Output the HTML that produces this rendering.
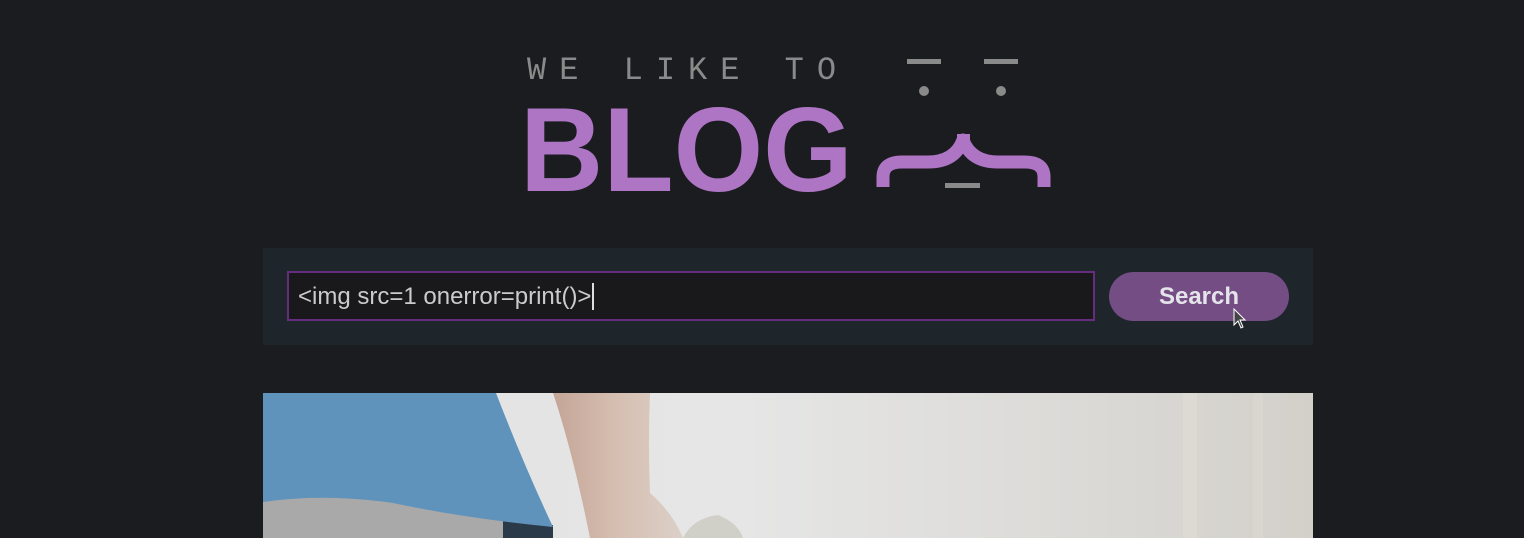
<!DOCTYPE html>
<html><head><meta charset="utf-8"><style>
body{margin:0;width:1524px;height:538px;overflow:hidden;background:#1b1c1f;position:relative;font-family:"Liberation Sans",sans-serif}
.we{position:absolute;left:527px;top:53px;font-family:"Liberation Mono",monospace;font-size:32px;color:#8a8a8a;letter-spacing:13px;line-height:36px;white-space:nowrap}
.blog{position:absolute;left:520px;top:90px;font-weight:bold;font-size:120px;color:#ae75c5;line-height:120px;transform:scaleX(0.96);transform-origin:0 0}
.panel{position:absolute;left:263px;top:248px;width:1050px;height:97px;background:#1e262b}
.inp{position:absolute;left:24px;top:23px;width:795px;height:46px;border:2px solid #652d80;background:#19191b;color:#cbcbcb;font-size:24px;line-height:48px;padding-left:9px;box-sizing:content-box;white-space:nowrap}
.cur{display:inline-block;width:2px;height:27px;background:#ddd;vertical-align:-6px;margin-left:1px}
.btn{position:absolute;left:846px;top:24px;width:180px;height:49px;border-radius:25px;background:#744d85;color:#e4e4ea;font-weight:bold;font-size:24px;text-align:center;line-height:50px}
.img{position:absolute;left:263px;top:393px;width:1050px;height:145px;overflow:hidden;background:linear-gradient(90deg,#e2e2e2 0%,#e6e6e6 45%,#dcdbd8 75%,#d3d0ca 100%)}
</style></head><body>
<div class="we">WE LIKE TO</div>
<div class="blog">BLOG</div>
<svg style="position:absolute;left:0;top:0" width="1524" height="200">
<rect x="907" y="59" width="34" height="5" fill="#8a8a8a"/>
<rect x="984" y="59" width="34" height="5" fill="#8a8a8a"/>
<circle cx="924" cy="91" r="5" fill="#8a8a8a"/>
<circle cx="1001" cy="91" r="5" fill="#8a8a8a"/>
<path d="M883,187 V177 Q883,162 902,162 H928 Q955,162 963,140 Q971,162 998,162 H1025 Q1044,162 1044,177 V187" fill="none" stroke="#ae75c5" stroke-width="13" stroke-linejoin="round"/>
<rect x="957" y="134" width="13" height="10" fill="#ae75c5"/>
<rect x="945" y="183" width="35" height="5" fill="#8a8a8a"/>
</svg>
<div class="panel">
<div class="inp">&lt;img src=1 onerror=print()&gt;<span class="cur"></span></div>
<div class="btn">Search</div>
<svg style="position:absolute;left:970px;top:60px" width="16" height="24"><path d="M1,1 L1,17 L5,13 L8,20 L10,19 L7,12 L12,12 Z" fill="#444" stroke="#fff" stroke-width="1"/></svg>
</div>
<div class="img">
<svg width="1050" height="145">
<defs><linearGradient id="a" x1="0" x2="1"><stop offset="0" stop-color="#c4a597"/><stop offset=".5" stop-color="#d6bfb2"/><stop offset="1" stop-color="#dcd0c8"/></linearGradient></defs>
<rect x="920" y="0" width="14" height="145" fill="#dedbd3" opacity=".7"/>
<rect x="990" y="0" width="10" height="145" fill="#dcd8d0" opacity=".6"/>
<path d="M0,95 L250,95 L285,132 L290,145 L0,145 Z" fill="#a9a9a9"/>
<path d="M240,128 L290,132 L290,145 L240,145Z" fill="#2b3a48"/>
<path d="M0,0 L233,0 Q260,70 290,134 Q200,125 130,110 Q60,100 0,109 Z" fill="#5f93bb"/>
<path d="M290,0 Q310,60 327,145 L420,145 Q410,120 387,100 Q385,50 387,0 Z" fill="url(#a)"/>
<path d="M420,145 Q430,125 455,122 Q475,130 480,145 Z" fill="#d0cfc8"/>
</svg>
</div>
</body></html>
